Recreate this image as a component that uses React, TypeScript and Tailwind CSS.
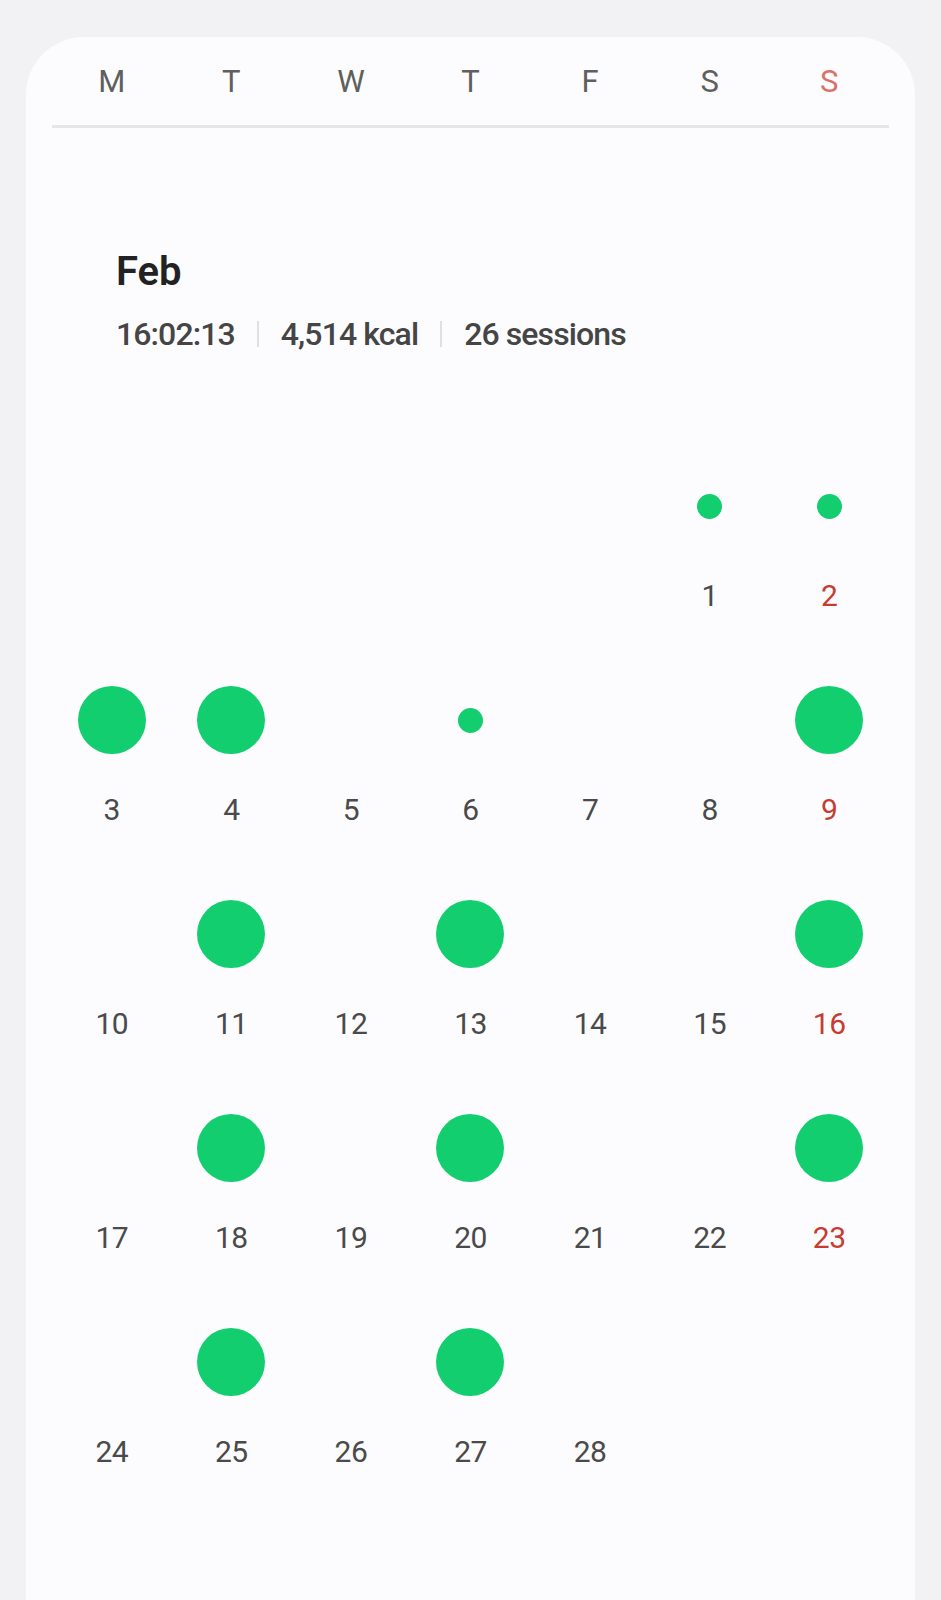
const weekdays = ["M", "T", "W", "T", "F", "S", "S"];

// dot size per day: "lg" = long session, "sm" = short
const activity: Record<number, "lg" | "sm"> = {
  1: "sm",
  2: "sm",
  3: "lg",
  4: "lg",
  6: "sm",
  9: "lg",
  11: "lg",
  13: "lg",
  16: "lg",
  18: "lg",
  20: "lg",
  23: "lg",
  25: "lg",
  27: "lg",
};

const FIRST_OFFSET = 5; // Feb 1 falls on a Saturday
const DAYS = 28;

const DayCell = ({ day, col }: { day: number; col: number }) => {
  const dot = activity[day];
  const isSunday = col === 6;
  return (
    <div className="flex h-[214px] flex-col items-center">
      <div className="flex h-[68px] w-full items-center justify-center">
        {dot === "lg" && <div className="h-[68px] w-[68px] rounded-full bg-[#13ce6f]" />}
        {dot === "sm" && <div className="h-[25px] w-[25px] rounded-full bg-[#13ce6f]" />}
      </div>
      <p
        className={`mt-[41px] text-[30px] leading-[30px] tracking-[-0.5px] ${
          isSunday ? "text-[#c63c31]" : "text-[#4a4a4a]"
        }`}
      >
        {day}
      </p>
    </div>
  );
};

const App: React.FC = () => {
  const cells: (number | null)[] = [
    ...Array(FIRST_OFFSET).fill(null),
    ...Array.from({ length: DAYS }, (_, i) => i + 1),
  ];

  return (
    <div
      className="min-h-screen bg-[#f2f2f4] px-[26px] pt-[37px]"
      style={{ fontFamily: "Roboto, 'Noto Sans', sans-serif" }}
    >
      <div className="min-h-[1563px] rounded-t-[58px] bg-[#fcfcfe] px-[26px]">
        <div className="grid h-[88px] grid-cols-7 items-center">
          {weekdays.map((d, i) => (
            <p
              key={i}
              className={`text-center text-[31px] leading-[31px] ${
                i === 6 ? "text-[#d8736a]" : "text-[#5f5f5f]"
              }`}
            >
              {d}
            </p>
          ))}
        </div>
        <div className="h-[3px] bg-[#e6e6e8]" />

        <div className="mt-[124px] pl-[64px]">
          <h2 className="text-[40px] font-semibold leading-[40px] text-[#222222]">Feb</h2>
          <div className="mt-[26px] flex items-center gap-[22px] text-[32px] font-medium leading-[32px] tracking-[-0.9px] text-[#454545]">
            <span>16:02:13</span>
            <span className="h-[26px] w-[2px] bg-[#e0e0e0]" />
            <span>4,514 kcal</span>
            <span className="h-[26px] w-[2px] bg-[#e0e0e0]" />
            <span>26 sessions</span>
          </div>
        </div>

        <div className="mt-[122px] grid grid-cols-7">
          {cells.map((day, i) =>
            day === null ? (
              <div key={i} className="h-[214px]" />
            ) : (
              <DayCell key={i} day={day} col={i % 7} />
            ),
          )}
        </div>
      </div>
    </div>
  );
};

export default App;
